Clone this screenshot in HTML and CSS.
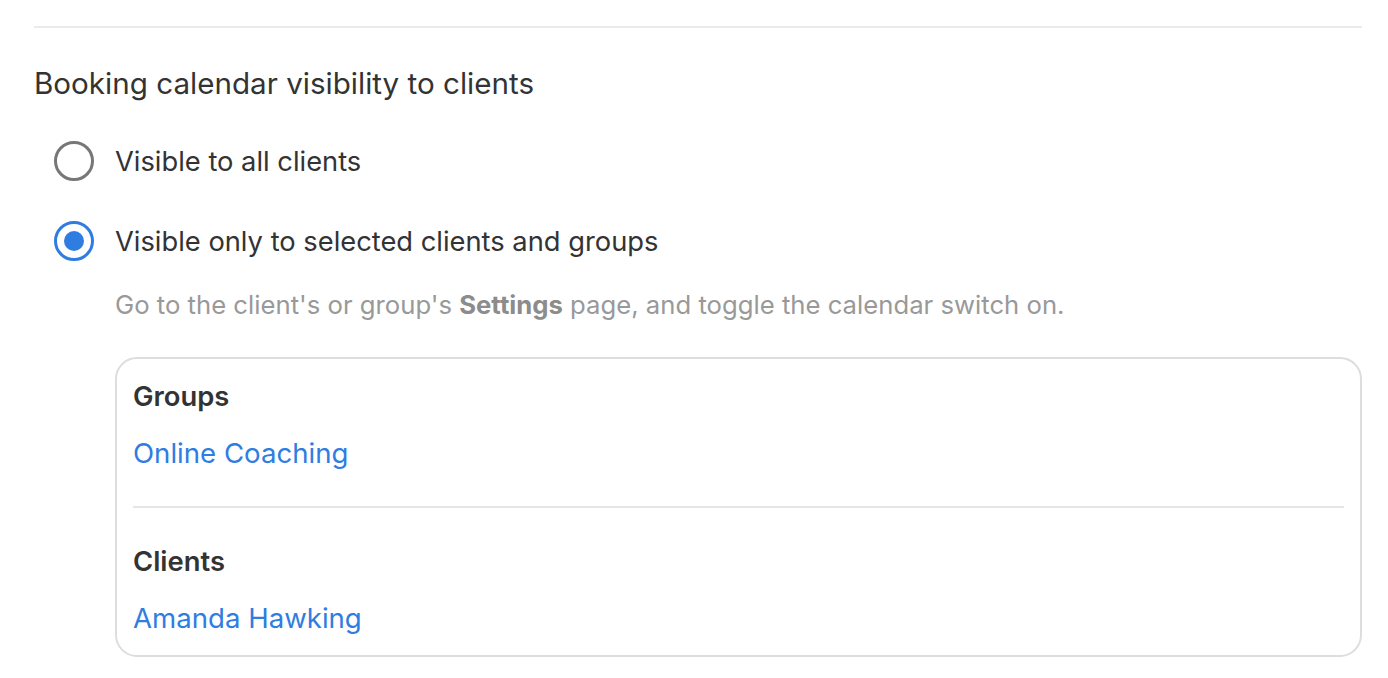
FILE: index.html
```html
<!DOCTYPE html>
<html lang="en">
<head>
<meta charset="utf-8">
<title>Booking calendar visibility</title>
<link rel="stylesheet" href="styles.css">
</head>
<body>
<div class="page">
  <hr class="top-divider">
  <h2 class="heading">Booking calendar visibility to clients</h2>
  <div class="options">
    <label class="option">
      <span class="radio"></span>
      <span class="option-label">Visible to all clients</span>
    </label>
    <label class="option">
      <span class="radio radio-checked"><span class="radio-dot"></span></span>
      <span class="option-label">Visible only to selected clients and groups</span>
    </label>
  </div>
  <div class="details">
    <p class="helper">Go to the client's or group's <strong>Settings</strong> page, and toggle the calendar switch on.</p>
    <div class="card">
      <div class="card-section">
        <div class="card-title">Groups</div>
        <a class="card-link">Online Coaching</a>
      </div>
      <div class="card-divider"></div>
      <div class="card-section">
        <div class="card-title">Clients</div>
        <a class="card-link">Amanda Hawking</a>
      </div>
    </div>
  </div>
</div>
</body>
</html>
```
FILE: styles.css
```css
* { box-sizing: border-box; }
html, body { margin: 0; padding: 0; background: #fff; }
body {
  font-family: Inter, "Liberation Sans", Arial, sans-serif;
  color: #333;
}
.page {
  padding: 26px 26px 0 34px;
}
.top-divider {
  margin: 0;
  border: 0;
  height: 2px;
  background: #ebebeb;
}
.heading {
  margin: 39px 0 0 0;
  font-size: 29.6px;
  line-height: 32px;
  font-weight: 400;
  color: #333;
}
.options {
  margin-top: 42px;
  display: flex;
  flex-direction: column;
  gap: 40px;
}
.option {
  display: flex;
  align-items: center;
  gap: 21px;
  height: 40px;
  margin-left: 20px;
}
.radio {
  width: 40px;
  height: 40px;
  border-radius: 50%;
  border: 3px solid #777;
  display: flex;
  align-items: center;
  justify-content: center;
  flex-shrink: 0;
}
.radio-checked { border-color: #2f7de1; }
.radio-dot {
  width: 20px;
  height: 20px;
  border-radius: 50%;
  background: #2f7de1;
}
.option-label {
  font-size: 27.3px;
  line-height: 32px;
  padding-top: 2px;
  color: #333;
}
.details {
  margin-left: 81px;
}
.helper {
  margin: 28px 0 0 0;
  font-size: 25.7px;
  line-height: 32px;
  color: #999;
}
.helper strong { font-weight: 700; color: #8c8c8c; }
.card {
  margin-top: 36px;
  border: 2px solid #ddd;
  border-radius: 22px;
  padding: 21px 0 21px 0;
}
.card-section {
  padding: 0 16px;
  display: flex;
  flex-direction: column;
  gap: 25px;
}
.card-section + .card-section { gap: 26px; }
.card-title {
  font-size: 27.4px;
  line-height: 32px;
  font-weight: 600;
  color: #333;
}
.card-link {
  font-size: 27.6px;
  line-height: 32px;
  color: #2f7de1;
  cursor: pointer;
}
.card-divider {
  height: 2px;
  background: #e6e6e6;
  margin: 37px 16px 37px 16px;
}
```
